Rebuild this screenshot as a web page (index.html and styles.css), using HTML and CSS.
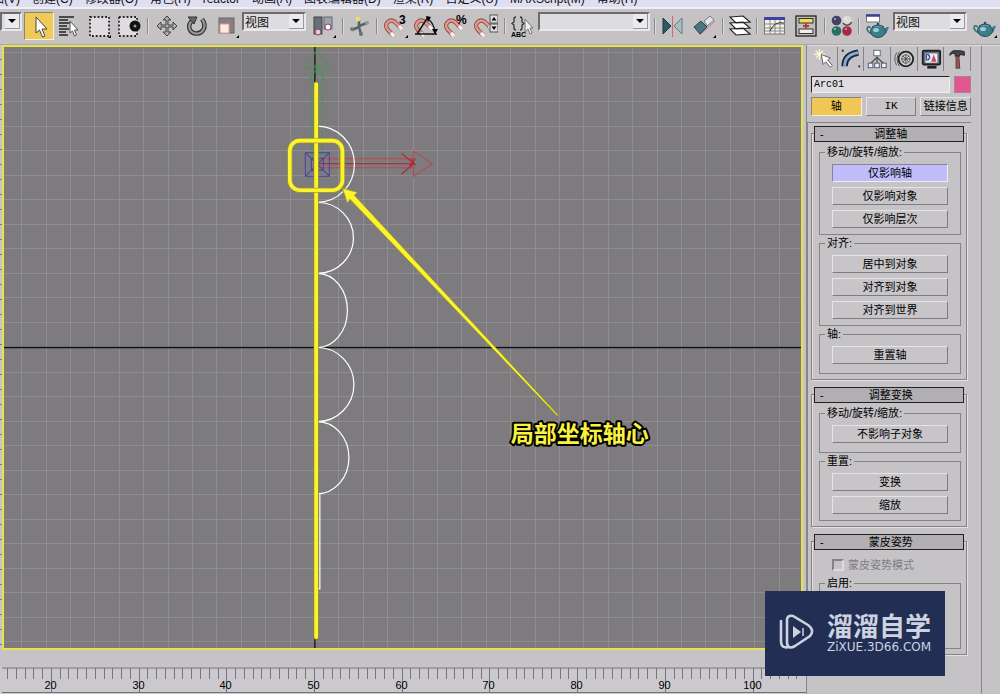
FILE: index.html
```html
<!DOCTYPE html>
<html lang="zh-CN">
<head>
<meta charset="utf-8">
<title>Arc01</title>
<link rel="stylesheet" href="styles.css">
</head>
<body>
<div class="app">
  <nav class="menu">
    <a href="#">视图(V)</a><a href="#">创建(C)</a><a href="#">修改器(O)</a><a href="#">角色(H)</a><a href="#">reactor</a><a href="#">动画(A)</a><a href="#">图表编辑器(D)</a><a href="#">渲染(R)</a><a href="#">自定义(U)</a><a href="#">MAXScript(M)</a><a href="#">帮助(H)</a>
  </nav>

  <div class="toolbar">
    <span class="combo combo-stub"><select aria-label="选择过滤器"><option></option></select><i class="drop"></i></span>
    <button class="tool active" aria-label="选择"><svg viewBox="0 0 24 24"><path d="M9 3V19L12.500 16L15.500 23L18 22L15 15H20Z" fill="#fff" stroke="#444"/></svg></button>
    <button class="tool" aria-label="按名称选择"><svg viewBox="0 0 24 24"><path d="M2 3H17M2 6H11M2 9H13M2 12H10M2 15H12M2 18H9M2 21H11" stroke="#222" stroke-width="1.600"/><path d="M13 7V19L15.500 17L17.500 22L19.500 21L17.500 16H21Z" fill="#fff" stroke="#555"/></svg></button>
    <button class="tool" aria-label="矩形选择区域"><svg viewBox="0 0 24 24"><rect x="3" y="3" width="19" height="19" fill="#dedce0" stroke="#222" stroke-width="1.800" stroke-dasharray="1.800 2"/><path d="M24 21V24H21Z"/></svg></button>
    <button class="tool" aria-label="窗口/交叉"><svg viewBox="0 0 24 24"><rect x="2" y="3" width="18" height="19" fill="#dedce0" stroke="#222" stroke-width="1.800" stroke-dasharray="1.800 2"/><circle cx="18" cy="12" r="5.500" fill="#111"/><circle cx="18" cy="12" r="1.500" fill="#999"/></svg></button>
    <i class="sep"></i>
    <button class="tool" aria-label="选择并移动"><svg viewBox="0 0 24 24"><path d="M12 2L16 6H13V11H18V8L22 12L18 16V13H13V18H16L12 22L8 18H11V13H6V16L2 12L6 8V11H11V6H8Z" fill="#aaa" stroke="#444"/></svg></button>
    <button class="tool" aria-label="选择并旋转"><svg viewBox="0 0 24 24"><path d="M17 5C23 13 17 20 11 19.500C4 19 2 11 7 7" fill="none" stroke="#333" stroke-width="4.500"/><path d="M17 5C23 13 17 20 11 19.500C4 19 2 11 7 7" fill="none" stroke="#999" stroke-width="2.200"/><path d="M3 3L12 3L9 10Z" fill="#666" stroke="#333"/></svg></button>
    <button class="tool" aria-label="选择并缩放"><svg viewBox="0 0 24 24"><rect x="4" y="4" width="15" height="15" fill="#8d7c83" stroke="#666"/><rect x="5" y="10" width="9" height="9" fill="#ffe9e4" stroke="#d79d9a"/><path d="M24 21V24H21Z"/></svg></button>
    <span class="combo combo-view"><select aria-label="参考坐标系"><option>视图</option></select><i class="drop"></i></span>
    <button class="tool" aria-label="使用轴点中心"><svg viewBox="0 0 24 24"><rect x="2" y="3" width="8" height="17" fill="#68707c" stroke="#444"/><rect x="12" y="3" width="8" height="12" fill="#9aa5ae" stroke="#667"/><circle cx="6" cy="18" r="3" fill="#ddc8dc" stroke="#a03a6a"/><circle cx="16" cy="13" r="3" fill="#fff" stroke="#a03a6a"/><path d="M24 21V24H21Z"/></svg></button>
    <i class="sep"></i>
    <button class="tool narrow" aria-label="选择并操纵"><svg viewBox="0 0 24 24"><path d="M11 5V13L4 16M11 12L19 9M11 13L13 20" fill="none" stroke="#59626a" stroke-width="2.500"/><circle cx="10" cy="5" r="2.500" fill="#eedb70"/><circle cx="4" cy="15" r="2" fill="#737c84"/><circle cx="19" cy="9" r="2" fill="#8f989f"/><circle cx="13" cy="20" r="2" fill="#68727a"/></svg></button>
    <i class="sep"></i>
    <button class="tool" aria-label="三维捕捉"><svg viewBox="0 0 24 24"><use href="#magnet"/><text x="15" y="10" class="icon-num">3</text><path d="M24 21V24H21Z"/></svg></button>
    <button class="tool" aria-label="角度捕捉"><svg viewBox="0 0 24 24"><use href="#magnet"/><path d="M1 20H23M3 20L14 3M14 5Q20 9 21 19" fill="none" stroke="#111" stroke-width="1.400"/><path d="M12 2L17 3L14 8ZM18 15H24L21 20Z"/></svg></button>
    <button class="tool" aria-label="百分比捕捉"><svg viewBox="0 0 24 24"><use href="#magnet"/><text x="12" y="10" class="icon-num">%</text></svg></button>
    <button class="tool" aria-label="微调器捕捉"><svg viewBox="0 0 24 24"><use href="#magnet"/><rect x="16" y="1" width="8" height="8" fill="#ddd" stroke="#555"/><rect x="16" y="10" width="8" height="8" fill="#ddd" stroke="#555"/><path d="M17.500 6.500H22.500L20 3ZM17.500 12.500H22.500L20 16Z"/></svg></button>
    <i class="sep"></i>
    <button class="tool narrow" aria-label="编辑命名选择"><svg viewBox="0 0 24 24"><path d="M6 3Q4 3 4 5V8L2 9.500L4 11V14Q4 16 6 16M10 3Q12 3 12 5V8L14 9.500L12 11V14Q12 16 10 16" fill="none" stroke="#333" stroke-width="1.300"/><text x="1" y="23" class="icon-abc">ABC</text><path d="M15 5V18L18 15L20 20L22 19L20 14H23Z" fill="#eee" stroke="#777"/></svg></button>
    <span class="combo combo-set"><select aria-label="命名选择集"><option></option></select><i class="drop"></i></span>
    <i class="sep"></i>
    <button class="tool" aria-label="镜像"><svg viewBox="0 0 24 24"><path d="M1 4L9 12L1 20Z" fill="#2f5960" stroke="#234"/><path d="M20 4L12 12L20 20Z" fill="#a8bec5" stroke="#678"/><path d="M10.500 2V23" stroke="#c66c70"/></svg></button>
    <button class="tool" aria-label="对齐"><svg viewBox="0 0 24 24"><path d="M2 13L9 7L15 13L8 20Z" fill="#477680" stroke="#345"/><path d="M12 7L18 2L22 6L15 12Z" fill="#dde3eb" stroke="#778"/><path d="M8 21L23 7" stroke="#cc777b"/><path d="M24 21V24H21Z"/></svg></button>
    <i class="sep"></i>
    <button class="tool narrow" aria-label="层管理器"><svg viewBox="0 0 24 24"><path d="M2 15L15 14L22 20L8 21Z M2 9L15 8L22 14L8 15Z M2 3L15 2L22 8L8 9Z" fill="#fff" stroke="#222" stroke-width="1.200"/></svg></button>
    <i class="sep"></i>
    <button class="tool" aria-label="曲线编辑器"><svg viewBox="0 0 24 24"><rect x="0.500" y="4" width="20" height="16" fill="#f3f2e6" stroke="#777"/><path d="M0 4.500H21" stroke="#4140a4" stroke-width="3"/><path d="M6 6V20M11 6V20M16 6V20M1 10H20M1 14H20M1 17H20" stroke="#888"/><path d="M6 17Q10 7 20 9" fill="none" stroke="#333"/></svg></button>
    <button class="tool" aria-label="图解视图"><svg viewBox="0 0 24 24"><rect x="2" y="2" width="20" height="20" fill="#c1bfb9" stroke="#222" stroke-width="1.300"/><rect x="5" y="4.500" width="14" height="4.500" fill="#f1dc5b" stroke="#333"/><rect x="5" y="15" width="14" height="4.500" fill="#eee" stroke="#333"/><path d="M12 9V15M9 12H15" stroke="#b2383d" stroke-width="1.800"/></svg></button>
    <i class="sep"></i>
    <button class="tool narrow" aria-label="材质编辑器"><svg viewBox="0 0 24 24"><circle cx="6.500" cy="6.500" r="4.800" fill="#424064"/><circle cx="17" cy="6.500" r="4.800" fill="#dadada"/><circle cx="6.500" cy="17" r="4.800" fill="#28715e"/><circle cx="17" cy="17" r="4.800" fill="#a32d42"/><path d="M13 9A4.800 4.800 0 0 0 21.500 8" fill="none" stroke="#555" stroke-width="1.500"/><path d="M4 5H6M15 5H17M4 15H6M15 15H17" stroke="#fff" stroke-width="1.500" opacity=".6"/></svg></button>
    <i class="sep"></i>
    <button class="tool" aria-label="渲染场景"><svg viewBox="0 0 24 24"><rect x="0.500" y="1" width="13" height="7" fill="#fff" stroke="#777"/><path d="M0 1.500H14" stroke="#3b3c9b" stroke-width="2.500"/><g transform="translate(0 5)"><use href="#teapot"/></g></svg></button>
    <span class="combo combo-render"><select aria-label="渲染类型"><option>视图</option></select><i class="drop"></i></span>
    <button class="tool" aria-label="快速渲染"><svg viewBox="0 0 24 24"><g transform="translate(0 4)"><use href="#teapot"/></g><path d="M24 21V24H21Z"/></svg></button>
  </div>

  <div class="work">
    <main class="stage">
      <div class="view">
        <svg class="scene" viewBox="2 45 800 604" preserveAspectRatio="xMidYMid slice">
          <g id="grid" stroke="#8e8d90" shape-rendering="crispEdges"></g>
          <path d="M2 347H802M314.500 47V648" stroke="#111" fill="none" stroke-width="1.300"/>
          <g fill="none" stroke="#519158">
            <path d="M316.500 50L305 68H329ZM311.500 68V158M322 68V158M316.500 60V84M308 80L316.500 69L325 80M313 64L320 72M320 64L316 68"/>
          </g>
          <g fill="none" stroke="#b84a50">
            <path d="M320 158.500H413M320 167.500H413M413 151L432 163.500L413 176Z"/>
            <path d="M318 163.500H414M401 153L413 163.500L401 174M410 158L415 165M415 158L409 166" stroke="#b51f29"/>
          </g>
          <path d="M305 152.500H329V176H305ZM305 152.500L329 176M329 152.500L305 176M311 158H323V170H311Z" fill="none" stroke="#46449e"/>
          <g fill="none" stroke="#fff" stroke-width="1.200">
            <path d="M317 126A37 38 0 0 1 317 202A36 35.500 0 0 1 317 273A30 37 0 0 1 317 347A36.500 37 0 0 1 317 421A31.500 36 0 0 1 317 493H319.500V588H315"/>
          </g>
          <path d="M315.800 84V636" stroke="#8f8c2c" stroke-width="5.200" stroke-linecap="round"/>
          <path d="M315.800 84V636" stroke="#fbf32c" stroke-width="3.800" stroke-linecap="round"/>
          <rect x="289.500" y="140.500" width="52.500" height="49.500" rx="10" fill="none" stroke="#a5a02d" stroke-width="5"/>
          <rect x="289.500" y="140.500" width="52.500" height="49.500" rx="10" fill="none" stroke="#fbf32c" stroke-width="3.600"/>
          <path d="M342 188L357 192L354 195L557.500 414.500L556.500 415.500L349.500 199L347 203Z" fill="#fbf32c" stroke="#96922f" stroke-width=".8"/>
          <text class="note" x="510" y="441">局部坐标轴心</text>
        </svg>
      </div>
      <svg class="ruler" viewBox="0 667 807 27" preserveAspectRatio="xMinYMin slice">
        <path d="M2 668H807M2 692.500H807" stroke="#747276"/>
        <g id="ticks" stroke="#777579" shape-rendering="crispEdges"></g>
        <g id="marks" class="marks"></g>
      </svg>
    </main>

    <aside class="panel">
      <div class="side">
        <div class="tabs">
          <button aria-label="创建"><svg viewBox="0 0 24 24"><path d="M7 1V13M1 7H13M3 3L11 11M11 3L3 11" stroke="#fff9cf" stroke-width="1.300"/><path d="M9 7L11 18L14 15L19 21L21 19L16 13L19 11Z" fill="#fff" stroke="#555"/></svg></button>
          <button aria-label="修改"><svg viewBox="0 0 24 24"><path d="M5 20Q5 7 20 5" fill="none" stroke="#1c2841" stroke-width="7"/><path d="M5 20Q5 7 20 5" fill="none" stroke="#8eadd0" stroke-width="3"/><path d="M2 3H4M20 20H22" stroke="#222" stroke-width="2"/></svg></button>
          <button aria-label="层次"><svg viewBox="0 0 24 24"><path d="M12 9V16M12 10L5 17M12 10L19 17" stroke="#555" stroke-width="1.500"/><rect x="8.500" y="2.500" width="7" height="6" fill="#fff" stroke="#567"/><rect x="2.500" y="16.500" width="5" height="5" fill="#eef" stroke="#456"/><rect x="9.500" y="16.500" width="5" height="5" fill="#eef" stroke="#456"/><rect x="17" y="16.500" width="5" height="5" fill="#eef" stroke="#456"/></svg></button>
          <button aria-label="运动"><svg viewBox="0 0 24 24"><circle cx="14" cy="12" r="8" fill="#ccc" stroke="#222" stroke-width="2"/><circle cx="14" cy="12" r="4.500" fill="#ddd" stroke="#555"/><path d="M14 7V17M9 12H19M10.500 8.500L17.500 15.500M17.500 8.500L10.500 15.500" stroke="#444"/><path d="M4 5Q0 12 4 19M7 4Q2 12 7 20" fill="none" stroke="#555"/></svg></button>
          <button aria-label="显示"><svg viewBox="0 0 24 24"><rect x="3" y="3" width="19" height="15" rx="1" fill="#62757f" stroke="#222" stroke-width="2"/><rect x="6" y="6" width="13" height="10" fill="#eee"/><path d="M7 7H9Q12 10 9 13H7Z" fill="none" stroke="#3d4aa0" stroke-width="1.500"/><path d="M12 15L15 7L18 15Z" fill="#d44464"/><path d="M8 21H18" stroke="#222" stroke-width="3"/></svg></button>
          <button aria-label="工具"><svg viewBox="0 0 24 24"><path d="M4 8Q5 2 12 3H16L20 4V8L15 7V9H10V6Q7 5 4 8Z" fill="#454548" stroke="#222"/><path d="M11 9H14L15 22H11Z" fill="#985b5c" stroke="#533"/></svg></button>
        </div>
        <div class="name-row">
          <input type="text" value="Arc01" aria-label="名称"><button class="swatch" aria-label="颜色"></button>
        </div>
        <div class="modes"><button class="gold">轴</button><button>IK</button><button>链接信息</button></div>

        <div class="rolls">
          <section class="roll">
            <button class="roll-head"><span>-</span><b>调整轴</b></button>
            <fieldset><legend>移动/旋转/缩放:</legend><button class="pressed">仅影响轴</button><button>仅影响对象</button><button>仅影响层次</button></fieldset>
            <fieldset><legend>对齐:</legend><button>居中到对象</button><button>对齐到对象</button><button>对齐到世界</button></fieldset>
            <fieldset class="single"><legend>轴:</legend><button>重置轴</button></fieldset>
          </section>
          <section class="roll">
            <button class="roll-head"><span>-</span><b>调整变换</b></button>
            <fieldset class="single"><legend>移动/旋转/缩放:</legend><button>不影响子对象</button></fieldset>
            <fieldset><legend>重置:</legend><button>变换</button><button>缩放</button></fieldset>
          </section>
          <section class="roll">
            <button class="roll-head"><span>-</span><b>蒙皮姿势</b></button>
            <label class="check"><input type="checkbox" disabled>蒙皮姿势模式</label>
            <fieldset class="tall"><legend>启用:</legend></fieldset>
          </section>
        </div>
      </div>
    </aside>
  </div>

  <div class="brand">
    <svg viewBox="0 0 36 36"><path d="M2 7V27Q2 35 10 33M8 29V5Q9 1 14 2L29 11Q36 16 31 22L16 32Q9 36 8 29" fill="none" stroke="#cdd2e0" stroke-width="2.600" stroke-linecap="round"/><path d="M14 12L22 18L14 24Z" fill="#cdd2e0"/><path d="M24 14V22" stroke="#cdd2e0" stroke-width="1.500"/></svg>
    <div><strong>溜溜自学</strong><span>ZiXUE.3D66.COM</span></div>
  </div>
</div>

<svg class="defs" aria-hidden="true">
  <defs>
    <g id="magnet"><path d="M9 21L4 16Q0 11 4 8Q7 5 11 8L17 14" fill="none" stroke="#8d4540" stroke-width="4.200"/><path d="M9 21L4 16Q0 11 4 8Q7 5 11 8L17 14" fill="none" stroke="#e09a8c" stroke-width="2.500"/><path d="M7 19L10 22M15 12L18 15" stroke="#f7f1ee" stroke-width="3.200"/></g>
    <g id="teapot"><path d="M5 9Q1 6 1 10Q2 14 7 15" fill="none" stroke="#376b78" stroke-width="1.500"/><path d="M18 12Q20 7 23 8L20 15Z" fill="#3f7d8b"/><ellipse cx="12" cy="12.500" rx="7.500" ry="6" fill="#3d7d8c" stroke="#264e5a"/><path d="M6 8Q12 4 18 8" fill="#5da0ad" stroke="#264e5a"/><circle cx="12" cy="5" r="1.300" fill="#264e5a"/><ellipse cx="10" cy="11" rx="3" ry="2" fill="#9cced6"/></g>
  </defs>
</svg>
<script src="scene.js"></script>
</body>
</html>
```

FILE: scene.js
```javascript
const NS = "http://www.w3.org/2000/svg";

function line(parent, x1, y1, x2, y2) {
  const el = document.createElementNS(NS, "line");
  Object.entries({ x1, y1, x2, y2 }).forEach(([k, v]) => el.setAttribute(k, v));
  parent.appendChild(el);
}

const grid = document.getElementById("grid");
for (let i = -12; i <= 20; i++) {
  const x = Math.round(314 + i * 24.4) + 0.5;
  line(grid, x, 47, x, 648);
}
for (let i = -12; i <= 12; i++) {
  const y = Math.round(346 + i * 24.5) + 0.5;
  line(grid, 2, y, 802, y);
}

const ticks = document.getElementById("ticks");
const marks = document.getElementById("marks");
for (let n = 15; n <= 105; n++) {
  const x = Math.round(314 + (n - 50) * 8.77) + 0.5;
  const major = n % 10 === 0;
  line(ticks, x, 668, x, major ? 692 : 679);
  if (major) {
    const t = document.createElementNS(NS, "text");
    t.setAttribute("x", x - 1);
    t.setAttribute("y", 689);
    t.textContent = n;
    marks.appendChild(t);
  }
}
```

FILE: styles.css
```css
* { box-sizing: border-box; }
body {
  margin: 0;
  background: #c5c3c6;
  color: #000;
  font: 11px/16px "Liberation Sans", "Noto Sans CJK SC", sans-serif;
}
button { font: inherit; color: inherit; padding: 0; border: 0; background: none; }
.defs { position: absolute; width: 0; height: 0; }
.app { position: relative; display: flex; flex-direction: column; height: 100vh; overflow: hidden; }

.menu {
  display: flex;
  align-items: flex-end;
  gap: 12px;
  height: 7px;
  overflow: hidden;
  background: #dfdff3;
  white-space: nowrap;
  font-size: 12px;
  margin-left: -20px;
}
.menu a { color: #111; text-decoration: none; }

.toolbar {
  display: flex;
  align-items: center;
  height: 38px;
  flex: none;
  padding-bottom: 2px;
  background: #c5c2c4;
  border-top: 2px solid #efeef2;
  border-bottom: 1px solid #aaa8a8;
}
.tool { width: 30px; height: 28px; flex: none; display: flex; align-items: center; justify-content: center; }
.tool svg { width: 24px; height: 24px; }
.tool.narrow { width: 26px; }
.tool.active { background: #f0ca58; border: 1px solid; border-color: #8a8478 #f5f0e0 #f5f0e0 #8a8478; }
.icon-num { font: bold 12px "Liberation Sans", sans-serif; }
.icon-abc { font: bold 7px "Liberation Sans", sans-serif; }
.sep { width: 8px; height: 16px; flex: none; display: flex; justify-content: center; }
.sep::before { content: ""; border-left: 1px solid #8b898c; border-right: 1px solid #dddbdf; }

.combo {
  display: flex;
  align-self: flex-start;
  margin-top: 3px;
  height: 19px;
  background: #dddce0;
  border: 2px solid;
  border-color: #6d6b6f #e9e8ec #e9e8ec #6d6b6f;
}
.combo select {
  appearance: none;
  flex: 1;
  min-width: 0;
  padding: 0 1px;
  border: 0;
  background: transparent;
  color: #111;
  font: 12px/15px "Noto Sans CJK SC", sans-serif;
}
.drop { flex: none; width: 15px; display: flex; align-items: center; justify-content: center; background: #eceaee; border-right: 1px solid #99979b; border-bottom: 1px solid #99979b; }
.drop::before { content: ""; border: 4px solid transparent; border-top-color: #000; border-bottom: 0; }
.combo-stub { width: 22px; margin-right: 2px; }
.combo-view { width: 64px; margin-right: 3px; }
.combo-set { width: 112px; margin-left: 3px; margin-right: 1px; }
.combo-render { width: 74px; margin-right: 3px; }

.work { display: flex; flex: 1; min-height: 0; }
.stage { flex: 1; min-width: 0; display: flex; flex-direction: column; border-right: 1px solid #88868a; }
.view {
  flex: 1;
  min-height: 0;
  margin-right: 3px;
  padding-left: 2px;
  background: repeating-linear-gradient(#c5c3c6 0 14px, #777 14px 15px);
}
.scene { display: block; width: 100%; height: 100%; background: #7d7b7e; outline: 2px solid #e9e34b; outline-offset: -2px; }
.note {
  font: bold 23px "Noto Sans CJK SC", sans-serif;
  fill: #fbf13f;
  stroke: #000;
  stroke-width: 4px;
  stroke-linejoin: round;
  paint-order: stroke;
}
.ruler { display: block; flex: none; width: 100%; height: 27px; margin-top: 17px; background: #cbc9cd; }
.marks { font: 11px "Liberation Sans", sans-serif; text-anchor: middle; }

.panel { width: 193px; flex: none; overflow: hidden; border-top: 1px solid #dddbdf; }
.side { width: 175px; height: 100%; padding: 1px 10px 0 4px; border-right: 1px solid #88868a; }
.tabs { display: flex; height: 24px; }
.tabs button { flex: 1; display: flex; justify-content: center; align-items: center; border-right: 1px solid #858388; }
.tabs svg { width: 22px; height: 22px; }
.name-row { display: flex; gap: 4px; height: 17px; margin-top: 5px; }
.name-row input {
  flex: 1;
  min-width: 0;
  padding: 0 2px;
  border: 1px solid;
  border-color: #222 #eee #eee #222;
  background: #dfdde1;
  font: 10px "Liberation Mono", monospace;
}
.swatch { width: 17px; background: #e0568f; border: 1px solid #b08090; }
.modes { display: grid; grid-template-columns: repeat(3, 1fr); gap: 4px; height: 19px; margin-top: 4px; }
.modes button, fieldset button {
  background: #c7c5c8;
  border: 1px solid;
  border-color: #e6e4e8 #7e7c80 #7e7c80 #e6e4e8;
  line-height: 15px;
  white-space: nowrap;
}
.modes button:nth-child(2) { font-family: "Liberation Mono", monospace; }
.modes .gold { background: #f0c754; border-color: #8a8478 #f5f0e0 #f5f0e0 #8a8478; }

.rolls { margin: 6px 0 0 -4px; padding: 3px 4px 0 3px; border-top: 1px solid #88868a; border-left: 1px solid #88868a; }
.roll { position: relative; display: flow-root; margin-bottom: 7px; padding: 0 6px 6px 8px; }
.roll::before {
  content: "";
  position: absolute;
  inset: 7px 0 0;
  border: 1px solid #858388;
  box-shadow: inset 1px 1px #e2e0e4, 1px 1px #e2e0e4;
  pointer-events: none;
}
.roll-head {
  position: relative;
  display: flex;
  align-items: center;
  width: 150px;
  height: 16px;
  margin: 0 0 2px -5px;
  padding: 0 5px;
  background: #b1afb2;
  border: 1px solid #222;
  line-height: 14px;
}
.roll-head b { flex: 1; font-weight: 400; text-align: center; }
fieldset {
  position: relative;
  min-width: 0;
  margin: 0;
  padding: 4px 12px 6px 12px;
  border: 1px solid #858388;
  display: grid;
  gap: 5px;
}
fieldset.single { padding-bottom: 9px; }
fieldset legend { margin-left: -7px; padding: 0 2px; line-height: 16px; height: 16px; }
fieldset button { height: 18px; }
fieldset .pressed { background: #bfbdfb; border-color: #88868a #eee #eee #88868a; }
.check { display: flex; align-items: center; gap: 4px; margin: 7px 0 2px 13px; color: #807e82; }
.check input {
  appearance: none;
  width: 12px;
  height: 12px;
  margin: 0;
  border: 2px solid;
  border-color: #858388 #dddbdf #dddbdf #858388;
}
.tall { height: 74px; }

.brand {
  position: absolute;
  right: 55px;
  bottom: 18px;
  display: flex;
  align-items: center;
  gap: 12px;
  width: 180px;
  height: 85px;
  padding: 0 0 4px 14px;
  background: #222e54;
  color: #cdd2e0;
}
.brand svg { width: 36px; height: 36px; flex: none; }
.brand strong, .brand span { display: block; white-space: nowrap; }
.brand strong { font: bold 26px/30px "Noto Sans CJK SC", sans-serif; }
.brand span { font: 12px/14px "DejaVu Sans", sans-serif; }
```
